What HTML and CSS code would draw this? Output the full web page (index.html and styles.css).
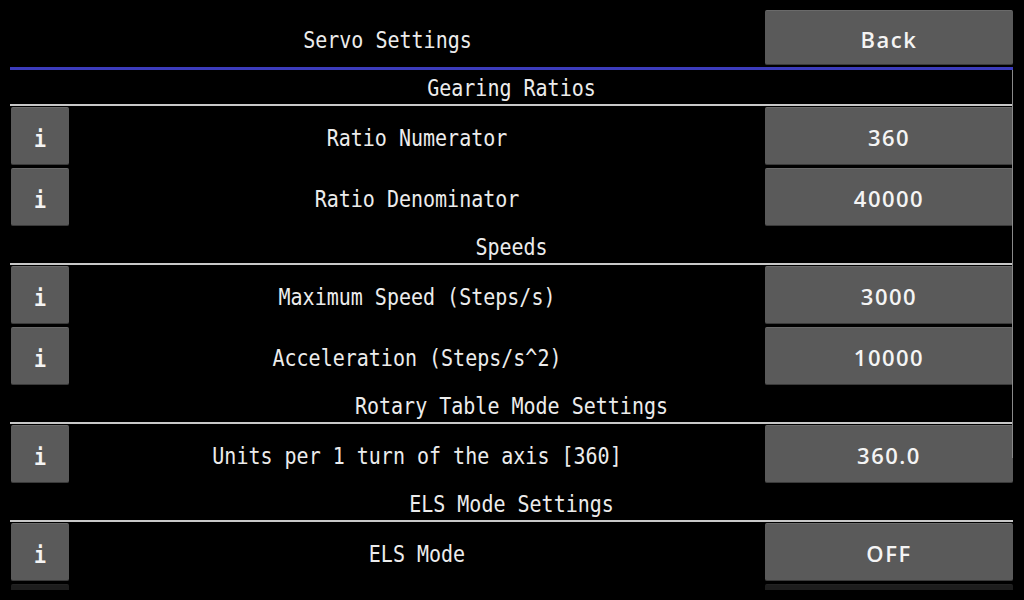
FILE: index.html
```html
<!DOCTYPE html>
<html lang="en">
<head>
  <meta charset="UTF-8" />
  <meta name="viewport" content="width=device-width, initial-scale=1.0" />
  <title>Servo Settings</title>
  <link rel="stylesheet" href="styles.css">
</head>
<body>
  <div class="screen">
    <!-- hlavička -->
    <div class="header">
      <div class="title"><span class="mono">Servo Settings</span></div>
      <button class="btn btn-value">Back</button>
    </div>
    <div class="header-line"></div>

    <!-- seznam nastavení -->
    <div class="settings">
      <div class="section"><span class="mono">Gearing Ratios</span></div>
      <div class="row">
        <button class="btn btn-info"><span class="mono">i</span></button>
        <div class="label"><span class="mono">Ratio Numerator</span></div>
        <button class="btn btn-value">360</button>
      </div>
      <div class="row">
        <button class="btn btn-info"><span class="mono">i</span></button>
        <div class="label"><span class="mono">Ratio Denominator</span></div>
        <button class="btn btn-value">40000</button>
      </div>

      <div class="section"><span class="mono">Speeds</span></div>
      <div class="row">
        <button class="btn btn-info"><span class="mono">i</span></button>
        <div class="label"><span class="mono">Maximum Speed (Steps/s)</span></div>
        <button class="btn btn-value">3000</button>
      </div>
      <div class="row">
        <button class="btn btn-info"><span class="mono">i</span></button>
        <div class="label"><span class="mono">Acceleration (Steps/s^2)</span></div>
        <button class="btn btn-value">10000</button>
      </div>

      <div class="section"><span class="mono">Rotary Table Mode Settings</span></div>
      <div class="row">
        <button class="btn btn-info"><span class="mono">i</span></button>
        <div class="label"><span class="mono">Units per 1 turn of the axis [360]</span></div>
        <button class="btn btn-value">360.0</button>
      </div>

      <div class="section"><span class="mono">ELS Mode Settings</span></div>
      <div class="row">
        <button class="btn btn-info"><span class="mono">i</span></button>
        <div class="label"><span class="mono">ELS Mode</span></div>
        <button class="btn btn-value">OFF</button>
      </div>
      <!-- další řádek, jen začátek pod okrajem -->
      <div class="row faded">
        <button class="btn btn-info"></button>
        <div class="label"></div>
        <button class="btn btn-value"></button>
      </div>
    </div>

    <!-- posuvník -->
    <div class="scrollbar"></div>
  </div>
</body>
</html>
```

FILE: styles.css
```css
body {
  margin: 0;
  background: #000;
  color: #ececec;
  font-family: 'DejaVu Sans Mono', monospace;
}
.screen {
  position: relative;
  width: 1024px;
  height: 600px;
  padding: 0 11px 0 10px;
  box-sizing: border-box;
  overflow: hidden;
}
.mono {
  display: inline-block;
  font-family: 'DejaVu Sans Mono', monospace;
  font-size: 20px;
  transform: scaleY(1.16);
}

/* === hlavička === */
.header {
  display: flex;
  align-items: flex-start;
  height: 67px;
}
.title {
  flex: 1;
  text-align: center;
  padding-top: 28px;
  line-height: 24px;
}
.header .btn-value {
  margin-top: 10px;
  height: 55px;
}
.header-line {
  height: 3px;
  background: #3c3cbc;
}

/* === tlačítka === */
.btn {
  border: none;
  border-top: 1px solid #6a6a6a;
  border-bottom: 1px solid #3a3a3a;
  border-radius: 2px;
  background: #5a5a5a;
  color: #f4f4f4;
  padding: 2px 0 0;
  cursor: pointer;
  box-sizing: border-box;
}
.btn-value {
  width: 248px;
  height: 58px;
  font-family: 'Open Sans', sans-serif;
  font-weight: 600;
  font-size: 22px;
  letter-spacing: 1.5px;
}
.btn-info {
  width: 58px;
  height: 58px;
  margin-left: 1px;
  padding-top: 5px;
}
.btn-info .mono {
  font-weight: bold;
}

/* === seznam nastavení === */
.settings {
  height: 520px;
  overflow: hidden;
}
.section {
  height: 34px;
  border-bottom: 2px solid #c8c8c8;
  margin-bottom: 1px;
  text-align: center;
  line-height: 34px;
}
.section .mono {
  line-height: 24px;
  vertical-align: middle;
}
.row {
  display: flex;
  align-items: center;
  margin-bottom: 3px;
}
.label {
  flex: 1;
  text-align: center;
  padding-top: 3px;
}
.faded {
  opacity: 0.33;
}

/* === posuvník === */
.scrollbar {
  position: absolute;
  left: 1012px;
  top: 70px;
  width: 1px;
  height: 388px;
  background: #8a8a8a;
}
```
